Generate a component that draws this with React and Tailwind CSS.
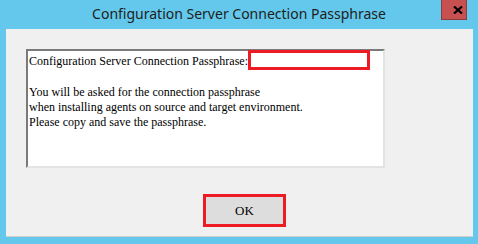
import React from 'react';

export default function App() {
  return (
    <div className="w-[478px] h-[244px] bg-[#63c8eb] flex flex-col overflow-hidden">
      {/* title bar */}
      <div className="h-[29px] grid grid-cols-[1fr_auto_1fr] items-start">
        <div />
        <div className="pt-[4px] text-[14px] leading-[20px] text-[#1e1e1e] font-['Noto_Sans',sans-serif] whitespace-nowrap">
          Configuration Server Connection Passphrase
        </div>
        <div className="flex justify-end pr-[11px]">
          <div className="w-[26px] h-[20px] bg-[#c75050] border border-t-0 border-[#8e3b3b] flex items-center justify-center pl-[8px]">
            <svg width="10" height="8" viewBox="0 0 10 8">
              <path d="M1 0.5 L9 7.5 M9 0.5 L1 7.5" stroke="#000" strokeWidth="2.2" />
            </svg>
          </div>
        </div>
      </div>

      {/* client area */}
      <div className="ml-[6px] w-[467px] h-[208px] bg-[#f0f0f0] border-b border-[#d0d0d0] pt-[20px] pl-[20px] flex flex-col">
        <div className="w-[359px] h-[119px] bg-white border-[2px] border-t-[#7a7a7a] border-l-[#7a7a7a] border-r-[#e3e3e3] border-b-[#e3e3e3] px-[1px] pt-[1px] font-['Liberation_Serif',serif] text-[12px] leading-[15px] text-black">
          <div className="flex items-start">
            <span className="pt-[2px] whitespace-nowrap shrink-0">Configuration Server Connection Passphrase:</span>
            <span className="-mt-[2px] w-[122px] h-[20px] shrink-0 border-[3px] border-[#ed1c24]" />
          </div>
          <div className="h-[15px]" />
          <div>You will be asked for the connection passphrase</div>
          <div>when installing agents on source and target environment.</div>
          <div>Please copy and save the passphrase.</div>
        </div>

        <div className="mt-[26px] ml-[177px] w-[83px] h-[33px] border-[3px] border-[#ed1c24] bg-[#dddddd] flex items-center justify-center font-['Liberation_Serif',serif] text-[13px] text-black">
          OK
        </div>
      </div>
    </div>
  );
}
